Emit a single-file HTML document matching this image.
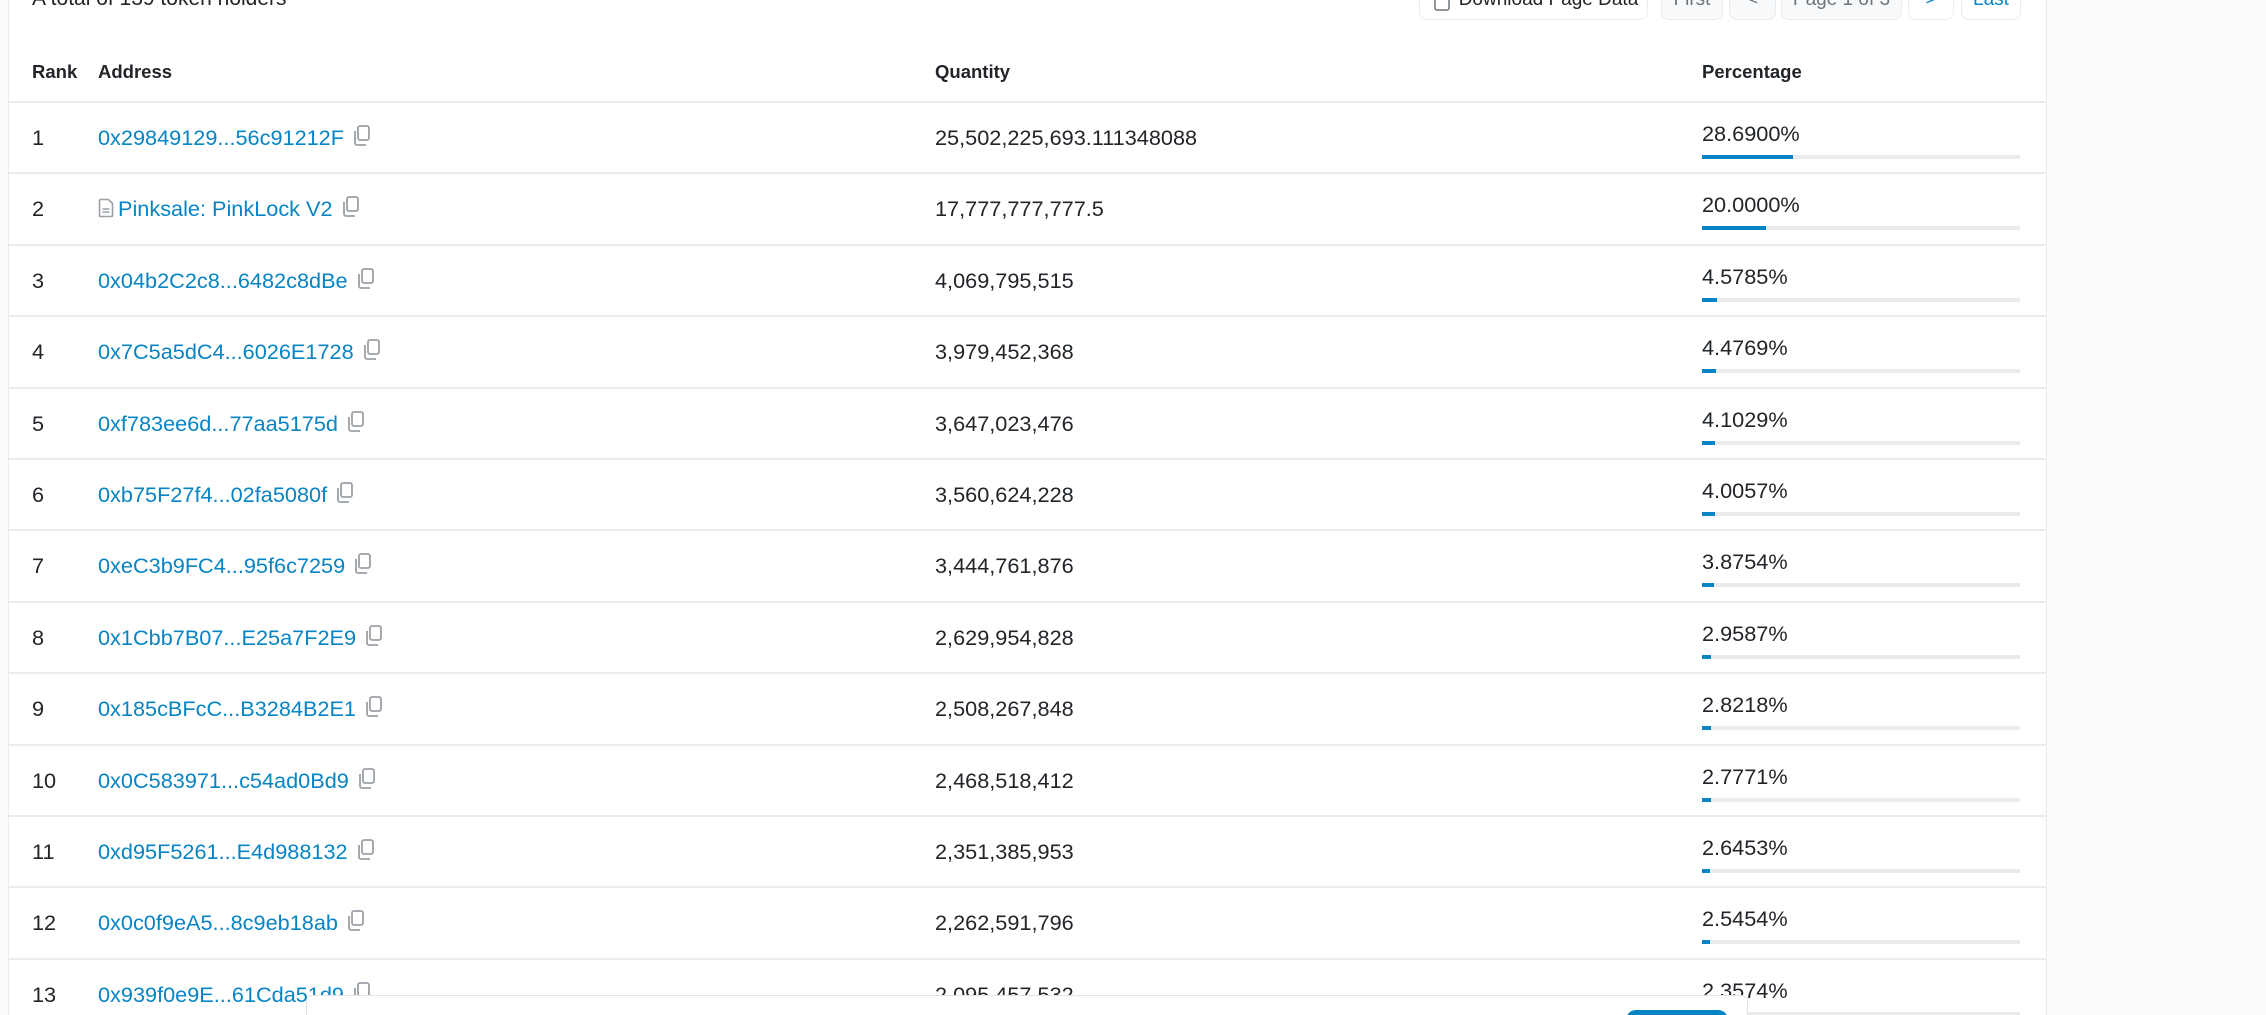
<!DOCTYPE html>
<html><head><meta charset="utf-8"><style>
*{box-sizing:border-box;margin:0;padding:0}
html,body{width:2266px;height:1015px;overflow:hidden}
body{background:#fbfbfb;font-family:"Liberation Sans",Arial,sans-serif;color:#212529;position:relative}
.card{position:absolute;left:8px;top:-20px;width:2039px;height:1035px;background:#fff;border:1px solid #e9ecef;border-bottom:none;border-radius:12px 12px 0 0}
.total{position:absolute;left:32px;top:-13px;font-size:21px;color:#212529}
.btn{position:absolute;top:-20px;height:40px;border:1px solid #e9ecef;border-radius:8px;background:#fff;font-size:19px;line-height:38px;text-align:center;color:#212529;white-space:nowrap}
.btn.dis{background:#f8f9fa;color:#6c757d}
.btn.blue{color:#0784c3}
.hdr{position:absolute;top:61px;font-size:18.5px;font-weight:bold}
.line{position:absolute;left:9px;width:2037px;height:2px;background:#e9ecef}
.cell{position:absolute;font-size:21.7px;white-space:nowrap}
a{color:#0784c3;text-decoration:none}
.bar{position:absolute;left:1702px;width:318px;height:4px;background:#e9ecef}
.bar i{display:block;height:4px;background:#0784c3}
.cp{display:inline-block;vertical-align:-2px;margin-left:9px}
.ov{position:absolute;left:306px;top:995px;width:1442px;height:40px;background:#fff;border:1px solid #e2e5e8;border-radius:6px}
.pill{position:absolute;left:1626px;top:1010px;width:102px;height:20px;background:#0784c3;border-radius:10px}
</style></head><body>
<div class="card"></div>
<div class="total">A total of 139 token holders</div>
<div class="btn" style="left:1419px;width:229px;padding-left:30px">Download Page Data<svg style="position:absolute;left:14px;top:16px" width="16" height="14" viewBox="0 0 16 14"><rect x="1" y="1" width="14" height="12" rx="2" fill="none" stroke="#6c757d" stroke-width="1.5"/></svg></div>
<div class="btn dis" style="left:1661px;width:62px">First</div>
<div class="btn dis" style="left:1729px;width:47px">&lt;</div>
<div class="btn dis" style="left:1781px;width:121px">Page 1 of 3</div>
<div class="btn blue" style="left:1908px;width:46px">&gt;</div>
<div class="btn blue" style="left:1961px;width:60px">Last</div>

<div class="hdr" style="left:32px">Rank</div>
<div class="hdr" style="left:98px">Address</div>
<div class="hdr" style="left:935px">Quantity</div>
<div class="hdr" style="left:1702px">Percentage</div>
<div class="line" style="top:101px"></div>

<div id="rows"></div>
<script>
var d=[["0x29849129...56c91212F","25,502,225,693.111348088","28.6900"],
["Pinksale: PinkLock V2","17,777,777,777.5","20.0000"],
["0x04b2C2c8...6482c8dBe","4,069,795,515","4.5785"],
["0x7C5a5dC4...6026E1728","3,979,452,368","4.4769"],
["0xf783ee6d...77aa5175d","3,647,023,476","4.1029"],
["0xb75F27f4...02fa5080f","3,560,624,228","4.0057"],
["0xeC3b9FC4...95f6c7259","3,444,761,876","3.8754"],
["0x1Cbb7B07...E25a7F2E9","2,629,954,828","2.9587"],
["0x185cBFcC...B3284B2E1","2,508,267,848","2.8218"],
["0x0C583971...c54ad0Bd9","2,468,518,412","2.7771"],
["0xd95F5261...E4d988132","2,351,385,953","2.6453"],
["0x0c0f9eA5...8c9eb18ab","2,262,591,796","2.5454"],
["0x939f0e9E...61Cda51d9","2,095,457,532","2.3574"]];
var cp='<svg class="cp" width="18" height="22" viewBox="0 0 18 22"><rect x="5" y="1" width="11" height="14" rx="2" fill="none" stroke="#9aa0a6" stroke-width="1.8"/><path d="M2 6v12a2 2 0 0 0 2 2h9" fill="none" stroke="#9aa0a6" stroke-width="1.8"/></svg>';
var doc='<svg style="vertical-align:-2px;margin-right:4px" width="16" height="20" viewBox="0 0 16 20"><path d="M1.5 2.5a1 1 0 0 1 1-1h8l4 4v12a1 1 0 0 1-1 1h-11a1 1 0 0 1-1-1z" fill="none" stroke="#9aa0a6" stroke-width="1.6"/><path d="M4.5 11h7M4.5 14h7" stroke="#9aa0a6" stroke-width="1.4"/></svg>';
var h='';
for(var i=0;i<d.length;i++){var t=102+71.4*i;
h+='<div class="cell" style="left:32px;top:'+(t+23)+'px">'+(i+1)+'</div>';
h+='<div class="cell" style="left:98px;top:'+(t+23)+'px">'+(i==1?doc:'')+'<a>'+d[i][0]+'</a>'+cp+'</div>';
h+='<div class="cell" style="left:935px;top:'+(t+23)+'px">'+d[i][1]+'</div>';
h+='<div class="cell" style="left:1702px;top:'+(t+19)+'px">'+d[i][2]+'%</div>';
h+='<div class="bar" style="top:'+(t+53)+'px"><i style="width:'+(parseFloat(d[i][2])*3.18)+'px"></i></div>';
if(i<12)h+='<div class="line" style="top:'+(t+70.4)+'px"></div>';}
document.getElementById('rows').innerHTML=h;
</script>
<div class="ov"></div>
<div class="pill"></div>
</body></html>
